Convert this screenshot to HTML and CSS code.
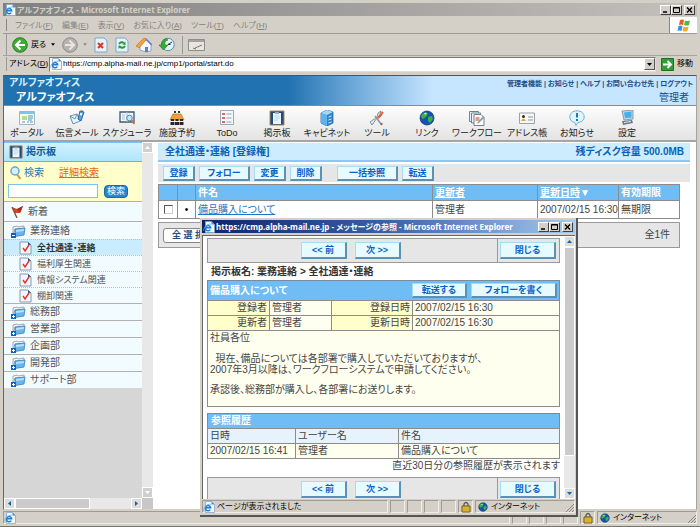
FILE: index.html
```html
<!DOCTYPE html>
<html lang="ja">
<head>
  <meta charset="UTF-8">
  <title>アルファオフィス</title>
  <link rel="stylesheet" href="styles.css">
</head>
<body>

  <svg class="defs" aria-hidden="true">
    <symbol id="ie" viewBox="0 0 12 12">
      <path d="M2.500.5h6l3 3v8h-9z" fill="#f4f9ff" stroke="#8aa4c8" stroke-width=".8"/>
      <path d="M8.500.5v3h3z" fill="#5b86c0"/>
      <path d="M7.300 8.600A2.600 2.600 0 1 1 7.700 6.800H3" fill="none" stroke="#1b7fd6" stroke-width="1.500"/>
      <path d="M.8 9.800C.5 6 4 3 8 3.200" fill="none" stroke="#58b4f0" stroke-width=".8"/>
    </symbol>
    <symbol id="folder" viewBox="0 0 15 14">
      <path d="M2 3l4-1 1 1 6-1v3H4L2 11z" fill="#f4f6f8" stroke="#8b97a5" stroke-width=".8"/>
      <path d="M4 5l10-1-1 7-9 1.500z" fill="#69b6ef" stroke="#3c7fb8" stroke-width=".8"/>
      <path d="M5 6l8-1-.3 2L5 8z" fill="#b9e1fb"/>
      <path d="M0 9h5v5H0z" fill="#0a62c4"/>
      <path d="M1 11.500h3" stroke="#fff"/>
    </symbol>
    <symbol id="plus" viewBox="0 0 15 14">
      <use href="#folder"/>
      <path d="M2.500 10v3" stroke="#fff"/>
    </symbol>
    <symbol id="note" viewBox="0 0 13 14">
      <path d="M1 1h8l3 3v9H1z" fill="#f3f7fd" stroke="#8796b4"/>
      <path d="M9 1v3h3z" fill="#1d5fae"/>
      <path d="M4 7l2 3 4-6" fill="none" stroke="#e03a1a" stroke-width="1.500"/>
    </symbol>
    <symbol id="board" viewBox="0 0 16 16">
      <path d="M1 1h14v14H1z" fill="#244a78" stroke="#a98e62"/>
      <path d="M4 3h8v11H4z" fill="#e8f6fc"/>
      <path d="M6 2h4v2H6z" fill="#9ab"/>
      <path d="M5 6h5M6 8h5M5 10h4" stroke="#9cc8dc" stroke-width=".7"/>
    </symbol>
    <symbol id="lock" viewBox="0 0 10 12">
      <path d="M3 6V3q2-3 4 0v3" fill="none" stroke="#555" stroke-width="1.300"/>
      <path d="M1 5h8v6H1z" fill="#f1c83a" stroke="#6d5510"/>
      <path d="M2 7h6M2 9h6" stroke="#a98418" stroke-width=".7"/>
    </symbol>
    <symbol id="globe" viewBox="0 0 16 16">
      <circle cx="8" cy="8" r="7" fill="#1651b4" stroke="#0b2d70" stroke-width=".7"/>
      <path d="M3 4l4-2 2 2-2 3-3 2-2-2zM9 7l4-1 1 3-3 4-2-2z" fill="#37b24a"/>
      <path d="M5 3l3 0-2 2z" fill="#c8f0a0"/>
    </symbol>
    <symbol id="min" viewBox="0 0 9 8"><path d="M2 6h4" stroke="#000" stroke-width="1.500"/></symbol>
    <symbol id="max" viewBox="0 0 9 8"><path d="M1.500 1.500h6v5h-6zM1.500 2h6" fill="none" stroke="#000"/></symbol>
    <symbol id="x" viewBox="0 0 9 8"><path d="M2 1.500l5 5M7 1.500l-5 5" stroke="#000" stroke-width="1.400"/></symbol>
  </svg>

  <div class="browser">
    <div class="titlebar inactive">
      <svg class="ie"><use href="#ie"/></svg>
      <span class="title">アルファオフィス - Microsoft Internet Explorer</span>
      <button type="button" class="win" aria-label="最小化"><svg><use href="#min"/></svg></button>
      <button type="button" class="win" aria-label="最大化"><svg><use href="#max"/></svg></button>
      <button type="button" class="win last" aria-label="閉じる"><svg><use href="#x"/></svg></button>
    </div>

    <div class="menubar">
      <ul>
        <li>ファイル(<u>F</u>)</li>
        <li>編集(<u>E</u>)</li>
        <li>表示(<u>V</u>)</li>
        <li>お気に入り(<u>A</u>)</li>
        <li>ツール(<u>T</u>)</li>
        <li>ヘルプ(<u>H</u>)</li>
      </ul>
      <div class="flag">
        <svg width="14" height="13" viewBox="0 0 14 13">
          <path d="M3 1q2-1 4 0L6 6Q4 5 2 6z" fill="#ee5a24"/>
          <path d="M8 1.500q2 1 5 0L12 6q-2 1-5 0z" fill="#4fb848"/>
          <path d="M1.500 7q2-1 4 0l-1 5q-2-1-4 0z" fill="#3c8fe0"/>
          <path d="M6.500 7.500q2 1 5 0l-1 4.500q-2 1-5 0z" fill="#f6a72c"/>
        </svg>
      </div>
    </div>

    <div class="toolbar">
      <button type="button" class="back">
        <svg width="16" height="16" viewBox="0 0 16 16">
          <circle cx="8" cy="8" r="7.300" fill="#3fab36" stroke="#23801f"/>
          <path d="M8.500 3.500L4 8l4.500 4.500M4.500 8H13" fill="none" stroke="#fff" stroke-width="2"/>
        </svg>
        戻る
        <svg class="arrow" width="4" height="3" viewBox="0 0 5 3"><path d="M0 0h5L2.500 3z"/></svg>
      </button>
      <button type="button" class="forward" aria-label="進む">
        <svg width="16" height="16" viewBox="0 0 16 16">
          <circle cx="8" cy="8" r="7.300" fill="#b5b3ae" stroke="#8e8c87"/>
          <path d="M7.500 3.500L12 8l-4.500 4.500M11.500 8H3" fill="none" stroke="#e8e6e0" stroke-width="2"/>
        </svg>
        <svg class="arrow" width="4" height="3" viewBox="0 0 5 3"><path d="M0 0h5L2.500 3z" fill="#888"/></svg>
      </button>
      <button type="button" aria-label="中止">
        <svg width="14" height="16" viewBox="0 0 14 16">
          <path d="M1 1h9l3 3v11H1z" fill="#e6f2fd" stroke="#7ba7d6"/>
          <path d="M4 6l5 5M9 6l-5 5" stroke="#dd3b1c" stroke-width="2.200"/>
        </svg>
      </button>
      <button type="button" aria-label="更新">
        <svg width="14" height="16" viewBox="0 0 14 16">
          <path d="M1 1h9l3 3v11H1z" fill="#e6f2fd" stroke="#7ba7d6"/>
          <path d="M4 7q2-3 5-1M10 9q-2 3-5 1" fill="none" stroke="#1f9a2c" stroke-width="1.800"/>
          <path d="M7.500 7.500L10.500 8V4.500zM6.500 9L3.500 8.500V12z" fill="#1f9a2c"/>
        </svg>
      </button>
      <button type="button" aria-label="ホーム">
        <svg width="16" height="16" viewBox="0 0 16 16">
          <path d="M4 8l6-5 5 5v6l-5 1-6-2z" fill="#f4f8ff" stroke="#7c94c0" stroke-width=".8"/>
          <path d="M0 9l8-8 3 1-8 9z" fill="#f2a33c" stroke="#b8701c" stroke-width=".6"/>
          <path d="M10 2l6 6" stroke="#5d83c0" stroke-width="1.300"/>
          <path d="M9 10h3v5H9z" fill="#5a82c4"/>
        </svg>
      </button>
      <button type="button" aria-label="履歴">
        <svg width="16" height="16" viewBox="0 0 16 16">
          <circle cx="9" cy="7.500" r="6.200" fill="#e3f2fa" stroke="#5b8fb0"/>
          <path d="M9 7.500L13 5M9 7.500h2.500" stroke="#234" />
          <path d="M7 1.500Q2 3 2.500 8H0l4.500 5L9 8H6Q5 4 9 3z" fill="#37aa3a" stroke="#1b7a25" stroke-width=".6"/>
        </svg>
      </button>
      <span class="divider"></span>
      <button type="button" aria-label="編集">
        <svg width="17" height="14" viewBox="0 0 17 14">
          <path d="M.5 1.500h16v11H.5z" fill="#e8e6e1" stroke="#8e8c87"/>
          <path d="M1 3h15" stroke="#8e8c87" stroke-width="1.500"/>
          <path d="M7 10l7-3M5 10l3 1" stroke="#777"/>
        </svg>
      </button>
    </div>

    <div class="address">
      <label for="url">アドレス(<u>D</u>)</label>
      <div class="field">
        <svg class="ie"><use href="#ie"/></svg>
        <input type="text" id="url" value="https://cmp.alpha-mail.ne.jp/cmp1/portal/start.do">
        <button type="button" class="drop" aria-label="一覧"><svg width="5" height="3" viewBox="0 0 5 3"><path d="M0 0h5L2.500 3z"/></svg></button>
      </div>
      <button type="button" class="go">
        <svg width="13" height="13" viewBox="0 0 13 13">
          <path d="M.5.5h12v12H.5z" fill="#2f9e33" stroke="#1c7420"/>
          <path d="M2 6.500h8M6.500 3L10 6.500 6.500 10" fill="none" stroke="#fff" stroke-width="1.800"/>
        </svg>
        移動
      </button>
    </div>

    <div class="viewport">
      <header class="banner">
        <div class="brand">
          <p>アルファオフィス</p>
          <h1>アルファオフィス</h1>
        </div>
        <div class="account">
          <nav>
            <a href="#">管理者機能</a> | <a href="#">お知らせ</a> | <a href="#">ヘルプ</a> | <a href="#">お問い合わせ先</a> | <a href="#">ログアウト</a>
          </nav>
          <p>管理者</p>
        </div>
      </header>

      <nav class="apps">
        <a href="#">
          <svg viewBox="0 0 16 16">
            <path d="M.5 1.500h15v13H.5z" fill="#f6fafc" stroke="#9db6c8"/>
            <path d="M1 2h14v2H1z" fill="#7cc4ee"/>
            <path d="M3 6h5v4H3z" fill="#bcd98c"/>
            <path d="M9 6h5M9 8h5M3 12h3M8 12h2M11 12h3M9 10h4" stroke="#8fb6cf" stroke-width="1.300"/>
          </svg>ポータル</a>
        <a href="#">
          <svg viewBox="0 0 16 16">
            <path d="M1 6l7-2 3 7-7 3z" fill="#e6f3fb" stroke="#6d95b5"/>
            <path d="M1 6l5 3 2-5" fill="none" stroke="#6d95b5"/>
            <path d="M11 1l4 1-3 9-3-2z" fill="#58a3dd" stroke="#2a68a8"/>
            <path d="M11.500 3l2 .6-.8 2-2-.6z" fill="#fff"/>
            <path d="M12 1l2-1" stroke="#e08b28"/>
          </svg>伝言メール</a>
        <a href="#">
          <svg viewBox="0 0 16 16">
            <path d="M1 2h14v10H1z" fill="#f5f9fc" stroke="#3a5878" stroke-width="1.300"/>
            <path d="M8 2v10M3 5h3M3 7h3M3 9h3" stroke="#a6c3d8"/>
            <circle cx="10.500" cy="8" r="2.800" fill="#c5e8fa" stroke="#5486ac"/>
            <path d="M12.500 10l3 4" stroke="#c07a35" stroke-width="1.800"/>
          </svg>スケジューラ</a>
        <a href="#">
          <svg viewBox="0 0 16 16">
            <path d="M5 1h2v2H5zM9 1h2v2H9z" fill="#333"/>
            <path d="M4 4h8l3 6H1z" fill="#eea13a" stroke="#b9701b" stroke-width=".7"/>
            <path d="M2 9h3v2H2zM6.500 9h3v2h-3zM11 9h3v2h-3zM1.500 12h4v3h-4zM6 12h4v3H6zM10.500 12h4v3h-4z" fill="#2b2430"/>
          </svg>施設予約</a>
        <a href="#">
          <svg viewBox="0 0 16 16">
            <path d="M1.500.5h13v14h-13z" fill="#f4f7fb" stroke="#9aa9bb"/>
            <path d="M3 3h3v2H3zM3 7h3v2H3zM3 11h3v2H3z" fill="#d86a62"/>
            <path d="M7.500 4h5M7.500 8h5M7.500 12h5" stroke="#8da2ba"/>
          </svg>ToDo</a>
        <a href="#"><svg><use href="#board"/></svg>掲示板</a>
        <a href="#">
          <svg viewBox="0 0 16 16">
            <path d="M2 3l6-3 6 2v11l-6 3-6-3z" fill="#2f83cf" stroke="#1a5596" stroke-width=".7"/>
            <path d="M2 3l6 2v11l-6-3z" fill="#5fb3ec"/>
            <path d="M2 3l6-3 6 2-6 3z" fill="#a5d8f7"/>
            <path d="M9.500 7l3-1M9.500 10l3-1M9.500 13l3-1" stroke="#d8effc"/>
          </svg>キャビネット</a>
        <a href="#">
          <svg viewBox="0 0 16 16">
            <path d="M1 12l7-5 1-4 3-2-1 3 2 1-3 3-2 0-5 7z" fill="#e1e6ea" stroke="#6e7d8a" stroke-width=".8"/>
            <path d="M14 2l-5 6" stroke="#e0622c" stroke-width="2"/>
            <path d="M6 6l6 8" stroke="#8998a5" stroke-width="1.500"/>
            <circle cx="12.500" cy="14" r="1.200" fill="#a06a50"/>
          </svg>ツール</a>
        <a href="#"><svg><use href="#globe"/></svg>リンク</a>
        <a href="#">
          <svg viewBox="0 0 16 16">
            <path d="M.5 1.500h9v10h-9z" fill="#eef3f7" stroke="#6f8394"/>
            <path d="M2.500 3h9v10h-9z" fill="#eef3f7" stroke="#6f8394"/>
            <path d="M5 4.500h7l3 3v8H5z" fill="#fbfdff" stroke="#6f8394"/>
            <path d="M6.500 7h4v4h-4z" fill="#e89a7c"/>
            <path d="M8 13l6-7 1.500 1.500-6 6z" fill="#8ca0b0"/>
          </svg>ワークフロー</a>
        <a href="#">
          <svg viewBox="0 0 16 16">
            <path d="M.5 3h15v10.500H.5z" fill="#f7f7f4" stroke="#9aa2a8"/>
            <circle cx="4.500" cy="6.500" r="1.500" fill="#3b2a22"/>
            <path d="M2 11q2.500-5 5 0z" fill="#e7a43d"/>
            <path d="M9 7h5M9 10h5" stroke="#8796a4"/>
          </svg>アドレス帳</a>
        <a href="#">
          <svg viewBox="0 0 16 16">
            <path d="M8 .8C3.500.8.8 3.500.8 7c0 3 2 5 5 5.500L7 15.500l2-3c4-.5 6.200-2.500 6.200-5.500C15.200 3.500 12.500.8 8 .8z" fill="#dff4fd" stroke="#6db3d4"/>
            <path d="M8 3v4.500M8 9v2" stroke="#1778c4" stroke-width="2"/>
          </svg>お知らせ</a>
        <a href="#">
          <svg viewBox="0 0 16 16">
            <path d="M3 1l11-1v9l-9 1z" fill="#c9d4dc" stroke="#75889a" stroke-width=".8"/>
            <path d="M5 2.500l7.500-1v6L6 8z" fill="#3cb2f0"/>
            <path d="M3 11l10-1 1 3-10 2z" fill="#6b7a88"/>
            <path d="M5 12.500l7-1" stroke="#dfe8ee"/>
          </svg>設定</a>
      </nav>

      <div class="frames">
        <aside class="sidebar">
          <div class="pane">
            <h2><svg width="14" height="14"><use href="#board"/></svg>掲示板</h2>
            <form class="search">
              <div class="search-head">
                <svg width="12" height="14" viewBox="0 0 12 14">
                  <circle cx="5" cy="5" r="4" fill="#d4efff" stroke="#6ba3d2" stroke-width="1.500"/>
                  <path d="M7 8.500l3.500 4.500" stroke="#d89040" stroke-width="2"/>
                </svg>
                <label for="q">検索</label>
                <a href="#">詳細検索</a>
              </div>
              <div class="search-row">
                <input type="text" id="q">
                <button type="button">検索</button>
              </div>
            </form>
            <ul class="tree">
              <li class="new"><a href="#"><svg width="13" height="13" viewBox="0 0 13 13"><path d="M1 2l5 2 6-3-3 7-5 0z" fill="#e2431e"/><path d="M1 2l5 11" stroke="#7c4a30" stroke-width="1.300"/><path d="M6 4l6-3-3 7z" fill="#b02a12"/></svg>新着</a></li>
              <li class="open"><a href="#"><svg width="15" height="14"><use href="#folder"/></svg>業務連絡</a>
                <ul>
                  <li class="current"><a href="#"><svg width="13" height="14"><use href="#note"/></svg>全社通達・連絡</a></li>
                  <li><a href="#"><svg width="13" height="14"><use href="#note"/></svg>福利厚生関連</a></li>
                  <li><a href="#"><svg width="13" height="14"><use href="#note"/></svg>情報システム関連</a></li>
                  <li><a href="#"><svg width="13" height="14"><use href="#note"/></svg>棚卸関連</a></li>
                </ul>
              </li>
              <li><a href="#"><svg width="15" height="14"><use href="#plus"/></svg>総務部</a></li>
              <li><a href="#"><svg width="15" height="14"><use href="#plus"/></svg>営業部</a></li>
              <li><a href="#"><svg width="15" height="14"><use href="#plus"/></svg>企画部</a></li>
              <li><a href="#"><svg width="15" height="14"><use href="#plus"/></svg>開発部</a></li>
              <li><a href="#"><svg width="15" height="14"><use href="#plus"/></svg>サポート部</a></li>
            </ul>
            <div class="hscroll">
              <span class="cap"><svg width="3" height="5" viewBox="0 0 3 5"><path d="M3 0v5L0 2.500z" fill="#0f62b4"/></svg></span>
              <span class="thumb"></span>
              <span class="cap"><svg width="3" height="5" viewBox="0 0 3 5"><path d="M0 0v5l3-2.500z" fill="#0f62b4"/></svg></span>
            </div>
          </div>
          <div class="vscroll disabled">
            <span class="cap"><svg width="5" height="3" viewBox="0 0 5 3"><path d="M0 3h5L2.500 0z" fill="#fff"/></svg></span>
            <span class="cap"><svg width="5" height="3" viewBox="0 0 5 3"><path d="M0 0h5L2.500 3z" fill="#fff"/></svg></span>
            <span class="corner"></span>
          </div>
        </aside>

        <main class="content">
          <div class="heading">
            <h2>全社通達・連絡 [登録権]</h2>
            <span>残ディスク容量 500.0MB</span>
          </div>
          <div class="actions">
            <button type="button" class="btn">登録</button>
            <button type="button" class="btn mid">フォロー</button>
            <button type="button" class="btn">変更</button>
            <button type="button" class="btn">削除</button>
            <button type="button" class="btn bulk">一括参照</button>
            <button type="button" class="btn">転送</button>
          </div>
          <table class="list">
            <thead>
              <tr>
                <th class="c-check"></th>
                <th class="c-dot"></th>
                <th>件名</th>
                <th class="c-user"><a href="#">更新者</a></th>
                <th class="c-date"><a href="#">更新日時</a>▼</th>
                <th class="c-limit">有効期限</th>
              </tr>
            </thead>
            <tbody>
              <tr>
                <td class="mark"><input type="checkbox" aria-label="備品購入について"></td>
                <td class="mark">•</td>
                <td><a href="#">備品購入について</a></td>
                <td>管理者</td>
                <td>2007/02/15 16:30</td>
                <td>無期限</td>
              </tr>
            </tbody>
          </table>
          <div class="list-foot">
            <button type="button">全 選 択</button>
            <span>全1件</span>
          </div>
        </main>
      </div>
    </div>

    <div class="statusbar">
      <span class="message"><svg class="ie"><use href="#ie"/></svg></span>
      <span class="slot"></span>
      <span class="slot"></span>
      <span class="slot"></span>
      <span class="slot"></span>
      <span class="slot"><svg width="10" height="12"><use href="#lock"/></svg></span>
      <span class="zone"><svg width="10" height="10"><use href="#globe"/></svg>インターネット
        <svg class="grip" width="8" height="8" viewBox="0 0 8 8"><path d="M0 8L8 0M3 8l5-5M6 8l2-2" stroke="#8a867e"/></svg></span>
    </div>
  </div>

  <div class="popup">
    <div class="titlebar">
      <svg class="ie"><use href="#ie"/></svg>
      <span class="title">https://cmp.alpha-mail.ne.jp - メッセージの参照 - Microsoft Internet Explorer</span>
      <button type="button" class="win" aria-label="最小化"><svg><use href="#min"/></svg></button>
      <button type="button" class="win" aria-label="最大化"><svg><use href="#max"/></svg></button>
      <button type="button" class="win last" aria-label="閉じる"><svg><use href="#x"/></svg></button>
    </div>

    <div class="popup-view">
      <div class="message-page">
        <div class="pager">
          <div class="steps">
            <button type="button" class="btn">&lt;&lt; 前</button>
            <button type="button" class="btn">次 &gt;&gt;</button>
          </div>
          <div class="close"><button type="button" class="btn">閉じる</button></div>
        </div>
        <p class="crumb">掲示板名: 業務連絡 &gt; 全社通達・連絡</p>

        <div class="message-head">
          <h3>備品購入について</h3>
          <button type="button" class="btn">転送する</button>
          <button type="button" class="btn write">フォローを書く</button>
        </div>
        <table class="meta">
          <tr><th>登録者</th><td>管理者</td><th class="when">登録日時</th><td class="time">2007/02/15 16:30</td></tr>
          <tr><th>更新者</th><td>管理者</td><th class="when">更新日時</th><td class="time">2007/02/15 16:30</td></tr>
        </table>
        <div class="message-body">
          <p>社員各位</p>
          <p>&nbsp; 現在、備品については各部署で購入していただいておりますが、<br>2007年3月以降は、ワークフローシステムで申請してください。</p>
          <p>承認後、総務部が購入し、各部署にお送りします。</p>
        </div>

        <table class="history">
          <caption>参照履歴</caption>
          <thead>
            <tr><th>日時</th><th>ユーザー名</th><th class="subject">件名</th></tr>
          </thead>
          <tbody>
            <tr><td>2007/02/15 16:41</td><td>管理者</td><td>備品購入について</td></tr>
          </tbody>
        </table>
        <p class="hint">直近30日分の参照履歴が表示されます</p>

        <div class="pager">
          <div class="steps">
            <button type="button" class="btn">&lt;&lt; 前</button>
            <button type="button" class="btn">次 &gt;&gt;</button>
          </div>
          <div class="close"><button type="button" class="btn">閉じる</button></div>
        </div>
      </div>
      <div class="vscroll">
        <span class="cap"><svg width="5" height="3" viewBox="0 0 5 3"><path d="M0 3h5L2.500 0z" fill="#0f62b4"/></svg></span>
        <span class="thumb"></span>
        <span class="cap"><svg width="5" height="3" viewBox="0 0 5 3"><path d="M0 0h5L2.500 3z" fill="#0f62b4"/></svg></span>
      </div>
    </div>

    <div class="statusbar">
      <span class="message"><svg class="ie"><use href="#ie"/></svg>ページが表示されました</span>
      <span class="slot"></span>
      <span class="slot"></span>
      <span class="slot"></span>
      <span class="slot"></span>
      <span class="slot"><svg width="10" height="12"><use href="#lock"/></svg></span>
      <span class="zone"><svg width="10" height="10"><use href="#globe"/></svg>インターネット
        <svg class="grip" width="8" height="8" viewBox="0 0 8 8"><path d="M0 8L8 0M3 8l5-5M6 8l2-2" stroke="#8a867e"/></svg></span>
    </div>
  </div>

</body>
</html>
```
FILE: styles.css
```css
* {
  box-sizing: border-box;
}

body {
  margin: 0;
  font-family: "Liberation Sans", "Noto Sans CJK JP", sans-serif;
  font-size: 10px;
  line-height: 14px;
  font-feature-settings: "palt";
  color: #444;
  background-color: #d4d0c8;
}

h1, h2, h3, p, ul {
  margin: 0;
  padding: 0;
  font-size: 10px;
  font-weight: normal;
}

ul {
  list-style: none;
}

a {
  color: inherit;
  text-decoration: none;
}

button, input {
  font: inherit;
  font-feature-settings: inherit;
  color: inherit;
  margin: 0;
  padding: 0;
  border: 0;
  background: none;
  white-space: nowrap;
}

svg {
  display: block;
  flex: none;
}

.defs {
  position: absolute;
  width: 0;
  height: 0;
}

.ie {
  width: 12px;
  height: 12px;
}

/* browser window */

.browser {
  display: flex;
  flex-direction: column;
  height: 100vh;
  padding: 3px 3px 1px;
  border-bottom: 1px solid #77756f;
}

.titlebar {
  display: flex;
  align-items: center;
  height: 13px;
  padding: 0 2px 0 1px;
  font-family: "Noto Sans", "Noto Sans CJK JP", sans-serif;
  font-size: 8px;
  line-height: 13px;
  font-weight: bold;
  color: #fff;
  background: linear-gradient(to right, #0a246a, #3a62a8 50%, #a6caf0);
}

.titlebar.inactive {
  color: #d4d0c8;
  background: linear-gradient(to right, #808080, #c4c0bc);
}

.title {
  flex: 1;
  padding-left: 1px;
  overflow: hidden;
  white-space: nowrap;
}

.win {
  width: 11px;
  height: 10px;
  background-color: #d4d0c8;
  border: 1px solid;
  border-color: #fff #404040 #404040 #fff;
}

.win.last {
  margin-left: 2px;
}

.win svg {
  width: 9px;
  height: 8px;
}

.menubar {
  display: flex;
  justify-content: space-between;
  height: 17px;
  margin-top: 1px;
  border-bottom: 1px solid #a09c94;
}

.menubar ul {
  display: flex;
  gap: 9px;
  padding-left: 8px;
  margin: 2px 0 2px 3px;
  border-left: 1px solid #888;
  font-size: 8px;
  line-height: 13px;
  color: #85827c;
}

.flag {
  display: flex;
  align-items: center;
  justify-content: center;
  width: 28px;
  background-color: #fff;
  border-left: 1px solid #888;
}

.toolbar {
  display: flex;
  align-items: center;
  gap: 7px;
  height: 21px;
  margin: 0 0 0 3px;
  padding-left: 5px;
  border-left: 1px solid #999;
  font-size: 8px;
  color: #000;
}

.back, .forward {
  display: flex;
  align-items: center;
  gap: 3px;
}

.back .arrow, .forward .arrow {
  margin-left: 2px;
}

.divider {
  width: 1px;
  height: 18px;
  margin-right: -2px;
  background-color: #999;
}

.address {
  display: flex;
  align-items: center;
  height: 17px;
  padding: 0 4px 0 3px;
  border-top: 1px solid #a8a49c;
  font-size: 8px;
  color: #000;
}

.address label {
  width: 43px;
  padding-left: 2px;
  border-left: 1px solid #999;
  white-space: nowrap;
}

.field {
  flex: 1;
  display: flex;
  align-items: center;
  height: 15px;
  background-color: #fff;
  border: 1px solid;
  border-color: #777 #ddd #ddd #777;
}

.field input {
  flex: 1;
  padding-left: 1px;
}

.drop {
  display: flex;
  align-items: center;
  justify-content: center;
  width: 11px;
  height: 12px;
  background-color: #d4d0c8;
  border: 1px solid;
  border-color: #fff #555 #555 #fff;
}

.go {
  display: flex;
  align-items: center;
  gap: 3px;
  padding-left: 5px;
  font-size: 8px;
}

.viewport {
  flex: 1;
  display: flex;
  flex-direction: column;
  min-height: 0;
  margin-top: 3px;
  background-color: #fff;
  border: 1px solid;
  border-color: #555 #a8a49c #d4d0c8 #666;
}

/* banner */

.banner {
  display: flex;
  justify-content: space-between;
  height: 29px;
  color: #fff;
  background: linear-gradient(to right, #2072b0 0, #2072b0 41%, #6aa6d8 50%, #c6e5ff 62%);
}

.brand {
  padding-left: 5px;
}

.brand p {
  font-weight: bold;
  color: #d4f0ff;
}

.brand h1 {
  padding-left: 7px;
  font-size: 11px;
  font-weight: bold;
}

.account {
  padding: 1px 3px 0 0;
  text-align: right;
  color: #1c4c88;
}

.account nav {
  font-size: 7px;
  font-weight: bold;
}

.account p {
  padding-right: 4px;
  line-height: 13px;
}

.apps {
  display: grid;
  grid-template-columns: repeat(13, minmax(0, 50px));
  height: 37px;
  border-top: 1px solid #8a8a8a;
  border-bottom: 2px solid #a5a5a5;
  background: linear-gradient(#fdfdfd, #e4e4e4);
}

.apps a {
  display: flex;
  flex-direction: column;
  align-items: center;
  padding-top: 4px;
  margin: 0 2px 0 -2px;
  font-size: 9px;
  line-height: 15px;
  white-space: nowrap;
  color: #222;
}

.apps svg {
  width: 16px;
  height: 16px;
}

/* frames */

.frames {
  flex: 1;
  display: flex;
  min-height: 0;
}

.sidebar {
  display: flex;
  width: 149px;
}

.pane {
  flex: 1;
  display: flex;
  flex-direction: column;
  background-color: #d6d6d6;
}

.pane h2 {
  display: flex;
  align-items: center;
  gap: 3px;
  height: 20px;
  padding-left: 5px;
  font-weight: bold;
  color: #0d5f9e;
  border-top: 1px solid #7ec0f5;
  border-bottom: 1px solid #5db4f5;
  background: linear-gradient(#d2f2fd, #aee6fb);
}

.search {
  height: 39px;
  padding: 3px 4px;
  background-color: #ffffcc;
}

.search-head, .search-row {
  display: flex;
  align-items: center;
}

.search-head {
  height: 16px;
  padding-left: 2px;
}

.search-head label {
  padding-left: 2px;
  color: #1f78b8;
}

.search-head a {
  margin-left: 15px;
  color: #e06a10;
  text-decoration: underline;
}

.search-row {
  gap: 6px;
  margin-top: 3px;
}

.search-row input {
  width: 90px;
  height: 14px;
  background-color: #fff;
  border: 1px solid #7ac4f4;
}

.search-row button {
  width: 24px;
  height: 13px;
  font-size: 9px;
  line-height: 11px;
  color: #fff;
  background-color: #2586cf;
  border: 1px solid #1b6aa8;
  border-radius: 4px;
}

.tree a {
  display: flex;
  align-items: center;
  gap: 4px;
  height: 17px;
  padding-left: 7px;
  color: #555;
  background-color: #f2fbff;
  border-top: 1px solid #b5b0ac;
}

.tree .new a {
  height: 20px;
}

.tree .open > a {
  height: 18px;
}

.tree ul a {
  gap: 5px;
  height: 16px;
  padding-left: 15px;
  font-size: 9px;
  border-top: 1px dotted #a9c4d4;
}

.tree .current a {
  font-weight: bold;
  color: #333;
  background-color: #c9ecff;
}

.hscroll, .vscroll {
  display: flex;
  background-color: #e8e8e8;
}

.hscroll {
  justify-content: space-between;
  height: 11px;
  margin-top: auto;
}

.vscroll {
  flex-direction: column;
  width: 11px;
}

.cap {
  display: flex;
  align-items: center;
  justify-content: center;
  width: 11px;
  height: 11px;
  background-color: #dcdcdc;
  border: 1px solid #fff;
}

.disabled .cap {
  background-color: #cfcfcf;
}

.disabled .cap + .cap {
  margin-top: auto;
}

.hscroll .thumb {
  width: 75px;
  margin-right: auto;
  background-color: #cbcbcb;
  border: 1px solid #fff;
}

.corner {
  height: 11px;
  background-color: #c8c8c8;
}

/* board list */

.content {
  flex: 1;
  padding: 1px 6px 0 5px;
}

.heading {
  display: flex;
  justify-content: space-between;
  height: 19px;
  padding: 2px 6px 0 7px;
  font-weight: bold;
  color: #0a62b8;
  background-color: #cdedff;
  border-bottom: 2px solid #8cc8f5;
}

.heading h2 {
  font-weight: bold;
}

.actions {
  display: flex;
  align-items: center;
  gap: 4px;
  height: 18px;
  margin-top: 2px;
  padding-left: 5px;
  background-color: #e6e6e6;
}

.btn {
  width: 32px;
  height: 15px;
  font-size: 9px;
  line-height: 12px;
  font-weight: bold;
  color: #0a62c8;
  background-color: #e6faff;
  border: 1px solid #a5dcf5;
  border-right: 2px solid #5a92b4;
  border-bottom: 2px solid #5a92b4;
}

.mid {
  width: 51px;
}

.bulk {
  width: 61px;
  margin-left: 11px;
}

table {
  border-collapse: collapse;
  table-layout: fixed;
}

th, td {
  padding: 0 2px;
  text-align: left;
  font-weight: normal;
  white-space: nowrap;
  border: 1px solid #8c8c8c;
}

.list {
  width: calc(100% - 10px);
  margin-top: 2px;
}

.list th {
  height: 16px;
  font-weight: bold;
  color: #fff;
  background-color: #70bcf5;
}

.list th a {
  text-decoration: underline;
}

.list td {
  height: 18px;
}

.list td a {
  color: #1b74c4;
  text-decoration: underline;
}

.c-check {
  width: 19px;
}

.c-dot {
  width: 18px;
}

.c-user {
  width: 105px;
}

.c-date {
  width: 81px;
}

.c-limit {
  width: 61px;
}

.list .mark {
  text-align: center;
  color: #000;
}

.mark input {
  appearance: none;
  display: block;
  width: 9px;
  height: 9px;
  margin: 0 auto;
  background-color: #fff;
  border: 1px solid;
  border-color: #555 #ccc #ccc #555;
}

.list-foot {
  display: flex;
  align-items: center;
  justify-content: space-between;
  width: calc(100% - 10px);
  height: 26px;
  margin-top: 3px;
  padding: 0 9px 0 4px;
  background-color: #e6e6e6;
  border: 1px solid #999;
}

.list-foot button {
  width: 50px;
  height: 15px;
  font-size: 9px;
  line-height: 13px;
  font-weight: bold;
  color: #234f86;
  background-color: #fff;
  border: 1px solid #888;
  border-radius: 3px;
}

/* status bar */

.statusbar {
  display: flex;
  align-items: center;
  gap: 2px;
  height: 15px;
  font-size: 8px;
  line-height: 13px;
  color: #000;
}

.message, .slot, .zone {
  display: flex;
  align-items: center;
  height: 13px;
  border: 1px solid;
  border-color: #a09c94 #f0eee8 #f0eee8 #a09c94;
}

.message {
  flex: 1;
  gap: 2px;
}

.slot {
  justify-content: center;
  width: 15px;
}

.zone {
  width: 100px;
  gap: 3px;
  padding-left: 2px;
}

.grip {
  align-self: flex-end;
  margin-left: auto;
}

/* message window, floats over the list */

.popup {
  position: absolute;
  left: 200px;
  top: 218px;
  display: flex;
  flex-direction: column;
  width: 378px;
  height: 299px;
  padding: 2px 1px 1px 2px;
  background-color: #d4d0c8;
  border: 1px solid;
  border-color: #e8e6e0 #555 #555 #e8e6e0;
  border-width: 0 2px 2px 0;
}

.popup-view {
  flex: 1;
  display: flex;
  justify-content: space-between;
  min-height: 0;
  margin-top: 2px;
  padding-left: 4px;
  overflow: hidden;
  background-color: #fff;
  border: 1px solid #666;
  border-width: 1px 0 0 1px;
}

.message-page {
  flex: 1;
  padding-top: 2px;
  margin-right: 4px;
}

.pager {
  display: flex;
  height: 25px;
  background-color: #e6e6e6;
  border: 1px solid #999;
}

.pager .btn {
  width: 46px;
  height: 17px;
}

.steps {
  flex: 1;
  display: flex;
  align-items: center;
  justify-content: center;
  gap: 8px;
  padding-right: 8px;
  padding-left: 4px;
}

.close {
  display: flex;
  align-items: center;
  padding: 0 3px 0 2px;
  border-left: 1px solid #999;
}

.close .btn {
  width: 56px;
}

.crumb {
  padding: 2px 4px;
  font-weight: bold;
  line-height: 13px;
  color: #333;
}

.message-head {
  display: flex;
  align-items: center;
  gap: 4px;
  height: 20px;
  padding: 0 2px;
  background-color: #70bcf5;
  border: 1px solid #7a8c9c;
  border-bottom: 0;
}

.message-head h3 {
  flex: 1;
  font-weight: bold;
  color: #fff;
}

.message-head .btn {
  width: 55px;
}

.message-head .write {
  width: 86px;
}

.meta, .history {
  width: 100%;
}

.meta th {
  width: 62px;
  text-align: right;
  background-color: #ffffcc;
}

.meta .when {
  width: 81px;
}

.meta .time {
  width: 147px;
}

.meta td, .history td {
  background-color: #fffff0;
}

.message-body {
  height: 76px;
  padding: 0 2px;
  line-height: 11px;
  background-color: #fffff0;
  border: 1px solid #8c8c8c;
  border-top: 0;
}

.message-body p {
  padding-bottom: 9px;
}

.message-body p:first-child {
  line-height: 13px;
}

.history {
  margin-top: 6px;
}

.history caption {
  padding: 0 3px;
  text-align: left;
  font-weight: bold;
  color: #fff;
  background-color: #70bcf5;
  border: 1px solid #7a8c9c;
  border-bottom: 0;
}

.history th {
  background-color: #e6f2fc;
}

.history th:first-child {
  width: 88px;
}

.history .subject {
  width: 161px;
}

.hint {
  padding-bottom: 4px;
  text-align: right;
}

.popup .vscroll .thumb {
  flex: 1;
  margin-bottom: 32px;
  background-color: #cbcbcb;
  border: 1px solid #fff;
}
```
